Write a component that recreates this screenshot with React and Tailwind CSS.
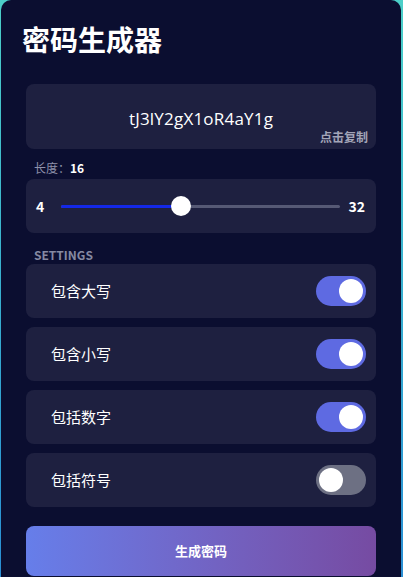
import React, { useState } from 'react';

const font = { fontFamily: '"Noto Sans CJK SC", "Noto Sans", sans-serif' };

function Toggle({ on, onClick }) {
  return (
    <button
      onClick={onClick}
      className={`w-[50px] h-[30px] rounded-full p-[3px] flex items-center transition-colors ${
        on ? 'bg-[#5e6ae2] justify-end' : 'bg-[#6d7083] justify-start'
      }`}
    >
      <span className="w-6 h-6 rounded-full bg-white block" />
    </button>
  );
}

export default function App() {
  const [length] = useState(16);
  const [opts, setOpts] = useState({ upper: true, lower: true, digits: true, symbols: false });

  const rows = [
    ['upper', '包含大写'],
    ['lower', '包含小写'],
    ['digits', '包括数字'],
    ['symbols', '包括符号'],
  ];

  const pct = ((length - 4) / (32 - 4)) * 100;

  return (
    <div
      className="w-[403px] h-[577px] overflow-hidden bg-gradient-to-b from-[#4ccfc8] to-[#2a8fd4] pl-[1px] pr-[2px]"
      style={font}
    >
      <div className="h-[600px] bg-[#0b0e30] rounded-t-[10px] pl-[21px] pr-[21px] pt-[19px]">
        <h1 className="text-[28px] font-bold text-white leading-[40px]">密码生成器</h1>

        <div className="px-1 mt-[25px]">
          {/* password display */}
          <div className="relative h-[65px] rounded-lg bg-[#1e2040] flex items-center justify-center pt-[4px]">
            <span className="text-[17px] text-white tracking-[0.2px]" style={{ fontFamily: '"Open Sans", "Noto Sans", sans-serif' }}>
              tJ3lY2gX1oR4aY1g
            </span>
            <span className="absolute right-[8px] bottom-[3px] text-[12px] font-bold text-[#a3a5b8]">点击复制</span>
          </div>

          {/* length */}
          <div className="mt-[11px] pl-2 text-[12px] leading-[16px] flex items-center">
            <span className="text-[#8e91aa]">长度：</span>
            <span className="text-white font-bold">{length}</span>
          </div>
          <div className="mt-[3px] h-[54px] rounded-lg bg-[#1e2040] flex items-center pl-[10px] pr-[11px]">
            <span className="text-[14px] font-bold text-white w-[25px]">4</span>
            <div className="relative flex-1 h-[3px] bg-[#565975] rounded-full">
              <div className="absolute left-0 top-0 h-[3px] bg-[#1428e8] rounded-full" style={{ width: `${pct}%` }} />
              <div
                className="absolute top-1/2 w-5 h-5 -mt-[10px] -ml-[10px] rounded-full bg-white"
                style={{ left: `${pct}%` }}
              />
            </div>
            <span className="text-[14px] font-bold text-white ml-[8px]">32</span>
          </div>

          {/* settings */}
          <div className="mt-[14px] pl-2 text-[12px] leading-[16px] font-bold text-[#8589a2]">SETTINGS</div>
          <div className="mt-[1px] flex flex-col gap-[9px]">
            {rows.map(([k, label]) => (
              <div key={k} className="h-[54px] rounded-lg bg-[#1e2040] flex items-center justify-between pl-[25px] pr-[10px]">
                <span className="text-[15px] text-white">{label}</span>
                <Toggle on={opts[k]} onClick={() => setOpts({ ...opts, [k]: !opts[k] })} />
              </div>
            ))}
          </div>

          <button className="mt-[19px] w-full h-[50px] rounded-lg bg-gradient-to-r from-[#667eea] to-[#764ba2] text-white text-[13px] font-bold">
            生成密码
          </button>
        </div>
      </div>
    </div>
  );
}
